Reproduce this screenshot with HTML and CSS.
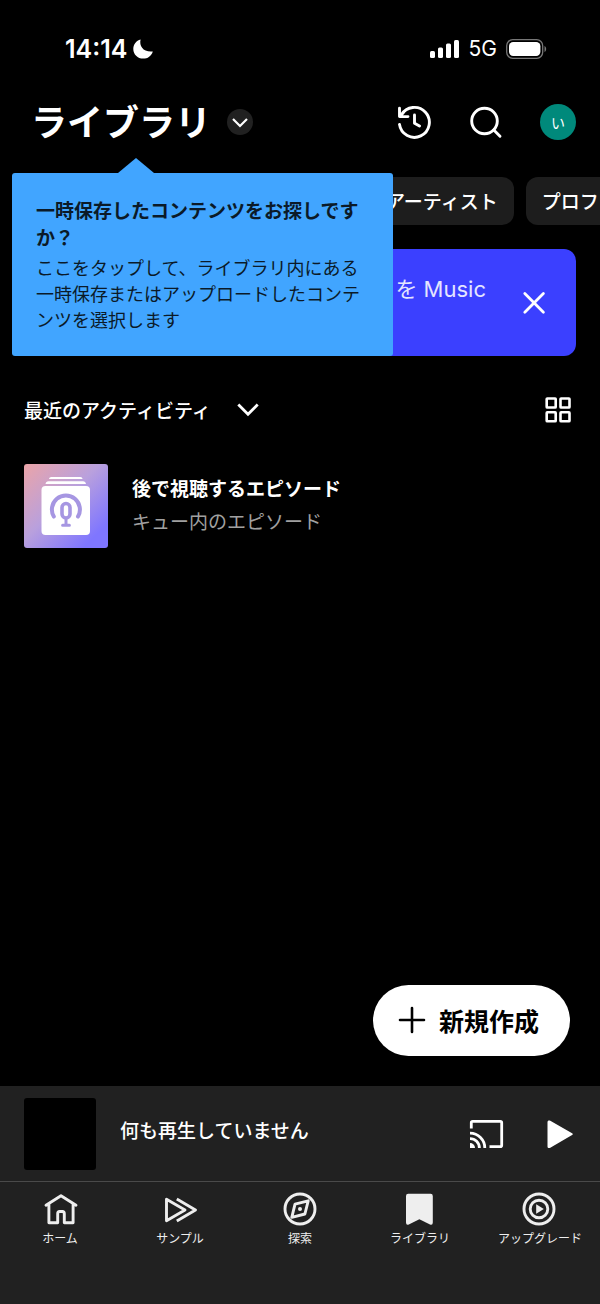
FILE: index.html
```html
<!DOCTYPE html>
<html lang="ja">
<head>
<meta charset="utf-8">
<meta name="viewport" content="width=device-width, initial-scale=1">
<title>ライブラリ</title>
<link rel="stylesheet" href="styles.css">
</head>
<body>
<div class="status">
  <div class="status-side">
    <span class="clock">14:14</span>
    <svg class="moon" viewBox="0 0 20 20" width="20" height="20" aria-hidden="true"><path d="M7.6.4C5.9 7 10.4 13.4 19.8 12.4 18.4 17 14.6 19.6 10.200 19.600 4.600 19.600.300 15.300.300 9.900.300 5.300 3.200 1.600 7.600.4z" fill="#fff"/></svg>
  </div>
  <div class="status-side status-net">
    <svg viewBox="0 0 30 20" width="30" height="20" aria-hidden="true" fill="#fff"><rect x="0" y="12" width="5" height="7" rx="1.500"/><rect x="8" y="8.500" width="5" height="10.500" rx="1.500"/><rect x="16" y="4.500" width="5" height="14.500" rx="1.500"/><rect x="24" y="1" width="5" height="18" rx="1.500"/></svg>
    <span class="network">5G</span>
    <svg viewBox="0 0 41 20" width="41" height="20" aria-hidden="true"><rect x=".7" y=".7" width="36" height="18.600" rx="6" fill="none" stroke="#777" stroke-width="1.300"/><rect x="3" y="3" width="31.400" height="14" rx="4.200" fill="#fff"/><path d="M38.500 7v6c2.200-1 2.200-5 0-6z" fill="#777"/></svg>
  </div>
</div>

<header class="header">
  <h1 class="title">ライブラリ</h1>
  <button class="round" aria-label="ライブラリを切り替え"><svg viewBox="0 0 26 26" width="26" height="26"><path d="M6 10l7 7 7-7" fill="none" stroke="#fff" stroke-width="2.200"/></svg></button>
  <div class="actions">
    <button class="icon" aria-label="履歴"><svg viewBox="0 0 36 36" width="36" height="36" fill="none" stroke="#fff" stroke-width="2.900" stroke-linecap="round" stroke-linejoin="round"><path d="M3.500 20.400A15 15 0 1 0 5.400 10.800M3.500 4.300V12.600H12M4.200 12.200L8 7.700M18.500 11v8.200l5 2.800"/></svg></button>
    <button class="icon" aria-label="検索"><svg viewBox="0 0 36 36" width="36" height="36" fill="none" stroke="#fff" stroke-width="2.900" stroke-linecap="round"><circle cx="16.500" cy="17" r="12.800"/><path d="M25.800 26l6.200 6.200"/></svg></button>
    <button class="avatar">い</button>
  </div>
  <aside class="tip" role="tooltip">
    <strong class="tip-title">一時保存したコンテンツをお探しですか？</strong>
    <p class="tip-body">ここをタップして、ライブラリ内にある一時保存またはアップロードしたコンテンツを選択します</p>
  </aside>
</header>

<main class="main">
  <div class="chips">
    <button class="chip">アーティスト</button>
    <button class="chip">プロフ</button>
  </div>
  <section class="banner">
    <p class="banner-text">を Music</p>
    <button class="icon" aria-label="閉じる"><svg viewBox="0 0 36 36" width="36" height="36" fill="none" stroke="#fff" stroke-width="2.800" stroke-linecap="round"><path d="M8.800 8.600l18.600 18.600M27.400 8.600L8.800 27.200"/></svg></button>
  </section>
  <div class="sort">
    <button class="sort-by">最近のアクティビティ<svg viewBox="0 0 22 14" width="22" height="14" aria-hidden="true"><path d="M1.300 1.600L11 11.300l9.700-9.700" fill="none" stroke="#fff" stroke-width="2.800"/></svg></button>
    <button class="icon" aria-label="グリッド表示"><svg viewBox="0 0 36 36" width="36" height="36" fill="none" stroke="#fff" stroke-width="2.600"><rect x="6.700" y="6.500" width="9" height="9" rx=".6"/><rect x="20.500" y="6.500" width="9" height="9" rx=".6"/><rect x="6.700" y="20.300" width="9" height="9" rx=".6"/><rect x="20.500" y="20.300" width="9" height="9" rx=".6"/></svg></button>
  </div>
  <a class="item" href="#">
    <svg class="cover" viewBox="0 0 84 84" width="84" height="84" aria-hidden="true">
      <defs><linearGradient id="g" x1="0" y1="0" x2="1" y2="1"><stop offset="0" stop-color="#eba4a8"/><stop offset=".45" stop-color="#b9a0dd"/><stop offset=".85" stop-color="#7f76ff"/></linearGradient></defs>
      <rect width="84" height="84" fill="url(#g)"/>
      <g fill="#fff"><path d="M25 15c.3-1.300 1-2 2.300-2h29c1.300 0 2 .7 2.300 2zM21.500 20c.4-1.800 1.300-2.700 3-2.700h34.500c1.700 0 2.600.9 3 2.700z"/><rect x="17.500" y="22" width="48.500" height="49" rx="4"/></g>
      <g fill="none" stroke="#a696e2" stroke-width="4" stroke-linecap="round"><path d="M29.800 52.600A14 14 0 1 1 54 52.600"/><rect x="38" y="39.500" width="8" height="14.500" rx="4" stroke-width="3.600"/><path d="M42 55v6M38.600 61.300h6.800" stroke-width="3"/></g>
    </svg>
    <span class="item-text"><span class="item-title">後で視聴するエピソード</span><span class="item-sub">キュー内のエピソード</span></span>
  </a>
  <button class="create"><svg viewBox="0 0 28 28" width="28" height="28" aria-hidden="true"><path d="M14 2v24M2 14h24" stroke="#000" stroke-width="2.600" stroke-linecap="round"/></svg>新規作成</button>
</main>

<section class="player">
  <div class="art"></div>
  <p class="playing">何も再生していません</p>
  <button class="icon" aria-label="キャスト"><svg viewBox="0 0 36 36" width="36" height="36" fill="none" stroke="#fff" stroke-width="2.800"><path d="M3.300 12.500V6.700Q3.300 5.300 4.700 5.300H32.300Q33.700 5.300 33.700 6.700V29.300Q33.700 30.700 32.300 30.700H21.500M2 17.200A14.800 14.800 0 0 1 16.800 32M2 22.600A9.400 9.400 0 0 1 11.400 32"/><path d="M2 27v5h5A5 5 0 0 0 2 27z" fill="#fff" stroke="none"/></svg></button>
  <button class="icon" aria-label="再生"><svg viewBox="0 0 36 36" width="36" height="36"><path d="M7.500 6v24.500c0 1.500 1.500 2 2.800 1.200l21.800-12.600c1-.6 1-1.200 0-1.800L10.300 4.800C9 4 7.500 4.500 7.500 6z" fill="#fff"/></svg></button>
</section>

<nav class="nav">
  <a class="tab" href="#"><svg viewBox="0 0 36 36" width="36" height="36" fill="none" stroke="#eee" stroke-width="2.900" stroke-linecap="round" stroke-linejoin="round"><path d="M4 14.200L19 4.800l15 9.400M6.900 12.800V31.700H15.700V22.700Q15.700 20.500 17.600 20.500H20.400Q22.300 20.500 22.300 22.700V31.700H31.100V12.800"/></svg>ホーム</a>
  <a class="tab" href="#"><svg viewBox="0 0 36 36" width="36" height="36" fill="none" stroke="#eee" stroke-width="2.900" stroke-linejoin="round"><path d="M4.500 8.300V29.700L23 19zM14.800 8L33.500 19 14.800 30"/></svg>サンプル</a>
  <a class="tab" href="#"><svg viewBox="0 0 36 36" width="36" height="36" fill="none" stroke="#eee" stroke-width="2.900" stroke-linejoin="round"><circle cx="18" cy="18" r="15"/><path d="M13 13.200L26.200 9.800 22.900 23 9.800 26.300z"/><circle cx="18" cy="18" r="2" fill="#eee" stroke="none"/></svg>探索</a>
  <a class="tab" href="#" aria-current="page"><svg viewBox="0 0 36 36" width="36" height="36"><path d="M4 5q0-2.200 2.200-2.200h22.400q2.200 0 2.200 2.200v26.500q0 3-2.800 2L17.400 28.200 6.800 33.500q-2.800 1-2.800-2z" fill="#eee"/></svg>ライブラリ</a>
  <a class="tab" href="#"><svg viewBox="0 0 36 36" width="36" height="36" fill="none" stroke="#eee" stroke-width="2.900"><circle cx="17" cy="18" r="15"/><circle cx="17" cy="18" r="8.800"/><path d="M14.200 13.300v9.400l7.600-4.700z" fill="#eee" stroke="none"/></svg>アップグレード</a>
</nav>
</body>
</html>
```
FILE: styles.css
```css
* {
  box-sizing: border-box;
}

body {
  margin: 0;
  min-height: 100vh;
  display: flex;
  flex-direction: column;
  overflow-x: hidden;
  background: #000;
  color: #fff;
  font-family: "Noto Sans CJK JP", sans-serif;
  font-size: 19px;
  line-height: 28px;
}

h1,
p {
  margin: 0;
}

svg {
  display: block;
  flex: none;
}

a {
  color: inherit;
  text-decoration: none;
}

button {
  padding: 0;
  border: 0;
  background: none;
  color: inherit;
  font: inherit;
  white-space: nowrap;
}

.status {
  display: flex;
  justify-content: space-between;
  height: 97px;
  padding: 0 53px 0 65px;
  font-family: Inter, sans-serif;
}

.status-side {
  display: flex;
  align-items: center;
  gap: 6px;
}

.status-net {
  gap: 9px;
}

.clock {
  font-size: 25px;
  font-weight: 600;
}

.network {
  font-size: 21px;
}

.header {
  position: relative;
  display: flex;
  align-items: center;
  height: 50px;
  padding: 0 24px 0 31px;
}

.title {
  font-size: 36px;
  font-weight: 700;
  line-height: 46px;
  padding-bottom: 4px;
}

.round {
  width: 26px;
  height: 26px;
  margin-left: 16px;
  border-radius: 50%;
  background: #212121;
}

.actions {
  display: flex;
  gap: 36px;
  margin-left: auto;
}

.icon {
  width: 36px;
  height: 36px;
  flex: none;
}

.avatar {
  width: 36px;
  height: 36px;
  border-radius: 50%;
  background: #00897b;
  font-size: 14px;
}

.tip {
  position: absolute;
  z-index: 2;
  top: 76px;
  left: 12px;
  width: 381px;
  padding: 23px 24px 24px;
  border-radius: 3px;
  background: #41a5ff;
  color: #0b1a28;
}

.tip::before {
  content: "";
  position: absolute;
  bottom: 100%;
  left: 106px;
  width: 36px;
  height: 15px;
  background: inherit;
  clip-path: polygon(50% 0, 100% 100%, 0 100%);
}

.tip-title {
  display: block;
  font-weight: 700;
  line-height: 27px;
}

.tip-body {
  margin-top: 4px;
  font-size: 18px;
  line-height: 26px;
}

.main {
  position: relative;
  flex: 1;
  padding: 30px 24px 0;
}

.chips {
  display: flex;
  gap: 12px;
  margin: 0 -24px;
  padding-left: 370px;
  overflow: hidden;
}

.chip {
  flex: none;
  height: 48px;
  padding: 0 16px;
  border-radius: 12px;
  background: #1d1d1d;
  font-weight: 500;
}

.banner {
  display: flex;
  align-items: center;
  justify-content: flex-end;
  gap: 30px;
  height: 107px;
  margin-top: 24px;
  padding: 24px;
  border-radius: 12px;
  background: #3b40ff;
}

.banner-text {
  align-self: flex-start;
  color: #e4e5ff;
  font-family: Inter, "Noto Sans CJK JP", sans-serif;
  font-size: 22px;
  line-height: 32px;
}

.sort {
  display: flex;
  align-items: center;
  justify-content: space-between;
  margin-top: 36px;
}

.sort-by {
  display: flex;
  align-items: center;
  gap: 26px;
  font-weight: 500;
}

.item {
  display: flex;
  align-items: center;
  gap: 24px;
  margin-top: 36px;
}

.cover {
  border-radius: 3px;
}

.item-text {
  display: flex;
  flex-direction: column;
  gap: 5px;
  padding-bottom: 4px;
}

.item-title {
  font-weight: 700;
}

.item-sub {
  color: #a0a0a0;
}

.create {
  position: absolute;
  right: 30px;
  bottom: 30px;
  display: flex;
  align-items: center;
  gap: 13px;
  height: 71px;
  padding: 0 31px 2px 25px;
  border-radius: 36px;
  background: #fff;
  color: #000;
  font-size: 25px;
  font-weight: 700;
}

.player {
  display: flex;
  align-items: center;
  gap: 24px;
  padding: 12px 24px 11px;
  background: #212121;
}

.art {
  width: 72px;
  height: 72px;
  border-radius: 3px;
  background: #000;
}

.playing {
  flex: 1;
  padding-bottom: 8px;
  font-weight: 500;
}

.player .icon + .icon {
  margin-left: 12px;
}

.nav {
  display: grid;
  grid-template-columns: repeat(5, 1fr);
  height: 123px;
  padding-top: 9px;
  border-top: 1px solid #4a4a4a;
  background: #212121;
}

.tab {
  display: flex;
  flex-direction: column;
  align-items: center;
  gap: 2px;
  color: #eee;
  font-size: 12px;
  line-height: 18px;
  white-space: nowrap;
}
```
